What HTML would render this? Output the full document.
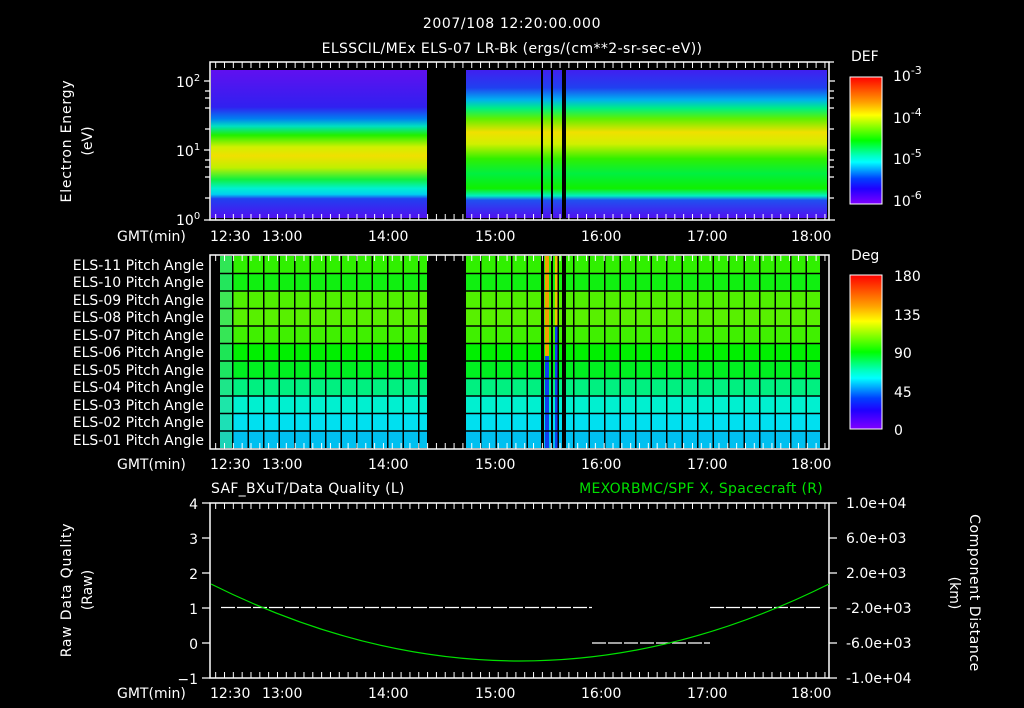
<!DOCTYPE html>
<html><head><meta charset="utf-8"><style>
html,body{margin:0;padding:0;background:#000;width:1024px;height:708px;overflow:hidden}
svg{display:block}
text{font-family:"DejaVu Sans","Liberation Sans",sans-serif;fill:#fff;font-size:14px}
</style></head><body>
<svg width="1024" height="708" viewBox="0 0 1024 708" xmlns="http://www.w3.org/2000/svg">
<defs>
<linearGradient id="sL" x1="0" y1="0" x2="0" y2="1">
<stop offset="0" stop-color="#6010f0"/><stop offset="0.25" stop-color="#3020f0"/>
<stop offset="0.33" stop-color="#0080f0"/><stop offset="0.38" stop-color="#00e0c0"/>
<stop offset="0.44" stop-color="#20f000"/><stop offset="0.52" stop-color="#d0f000"/>
<stop offset="0.58" stop-color="#f0e000"/><stop offset="0.66" stop-color="#c0f000"/>
<stop offset="0.74" stop-color="#10f040"/><stop offset="0.8" stop-color="#00f0d0"/>
<stop offset="0.84" stop-color="#00d0f0"/><stop offset="0.87" stop-color="#2040f0"/>
<stop offset="1" stop-color="#5010f0"/></linearGradient>
<linearGradient id="sR" x1="0" y1="0" x2="0" y2="1">
<stop offset="0" stop-color="#4020f0"/><stop offset="0.12" stop-color="#2040f0"/>
<stop offset="0.2" stop-color="#00b0f0"/><stop offset="0.26" stop-color="#00f080"/>
<stop offset="0.33" stop-color="#60f000"/><stop offset="0.42" stop-color="#f0e000"/>
<stop offset="0.5" stop-color="#d0f000"/><stop offset="0.6" stop-color="#30f000"/>
<stop offset="0.7" stop-color="#00f040"/><stop offset="0.8" stop-color="#10f000"/>
<stop offset="0.85" stop-color="#00f0c0"/><stop offset="0.88" stop-color="#2050f0"/>
<stop offset="1" stop-color="#5010f0"/></linearGradient>
<linearGradient id="cb" x1="0" y1="0" x2="0" y2="1">
<stop offset="0" stop-color="#ff0000"/><stop offset="0.2" stop-color="#ffa000"/>
<stop offset="0.3" stop-color="#ffff00"/><stop offset="0.5" stop-color="#00ff00"/>
<stop offset="0.62" stop-color="#00ffc0"/><stop offset="0.67" stop-color="#00ffff"/>
<stop offset="0.8" stop-color="#0040ff"/><stop offset="0.88" stop-color="#2000ff"/>
<stop offset="1" stop-color="#8000ff"/></linearGradient>
<pattern id="tk" x="224" y="0" width="8.83" height="10" patternUnits="userSpaceOnUse"><rect x="0" y="0" width="1" height="10" fill="#fff"/></pattern>
<pattern id="gv" x="232" y="0" width="15.5" height="10" patternUnits="userSpaceOnUse"><rect x="0" y="0" width="1.5" height="10" fill="#000"/></pattern>
</defs>

<text x="512" y="28" text-anchor="middle" font-size="16" letter-spacing="0.6">2007/108 12:20:00.000</text>
<text x="512" y="53" text-anchor="middle" font-size="16" letter-spacing="0.4">ELSSCIL/MEx ELS-07 LR-Bk  (ergs/(cm**2-sr-sec-eV))</text>

<!-- Panel 1 -->
<rect x="211" y="70" width="216" height="148" fill="url(#sL)"/>
<rect x="466" y="70" width="361" height="148" fill="url(#sR)"/>
<rect x="541" y="70" width="2" height="148" fill="#000"/>
<rect x="551" y="70" width="2" height="148" fill="#000"/>
<rect x="562" y="70" width="4" height="148" fill="#000"/>
<rect x="210" y="62" width="619" height="6" fill="url(#tk)"/>
<rect x="210" y="214" width="619" height="6" fill="url(#tk)"/>
<rect x="210" y="62" width="619" height="158" fill="none" stroke="#fff" stroke-width="1.5"/>
<g stroke="#fff" stroke-width="1.2">
<path d="M204 81h6M204 150h6M204 220h6M205 91h5M205 98h5M205 108h5M205 129h5M205 160h5M205 167h5M205 177h5M205 198h5"/>
<path d="M829 81h6M829 150h6M829 220h6M829 91h5M829 98h5M829 108h5M829 129h5M829 160h5M829 167h5M829 177h5M829 198h5M829 62h5"/>
</g>
<text x="176" y="87" font-size="14">10<tspan dy="-6" font-size="10">2</tspan></text>
<text x="176" y="156" font-size="14">10<tspan dy="-6" font-size="10">1</tspan></text>
<text x="176" y="225" font-size="14">10<tspan dy="-6" font-size="10">0</tspan></text>
<text transform="translate(71,141) rotate(-90)" text-anchor="middle" font-size="16" letter-spacing="0.8">Electron Energy</text>
<text transform="translate(92,141) rotate(-90)" text-anchor="middle" font-size="16">(eV)</text>

<g font-size="14">
<text x="117" y="241">GMT(min)</text>
<text x="210" y="241">12:30</text><text x="262" y="241">13:00</text><text x="368" y="241">14:00</text>
<text x="475" y="241">15:00</text><text x="581" y="241">16:00</text><text x="687" y="241">17:00</text><text x="791" y="241">18:00</text>
</g>

<rect x="850" y="77" width="32" height="127" fill="url(#cb)" stroke="#fff" stroke-width="1"/>
<text x="851" y="61" font-size="16">DEF</text>
<text x="893" y="81" font-size="16">10<tspan dy="-7" font-size="11">-3</tspan></text>
<text x="893" y="123" font-size="16">10<tspan dy="-7" font-size="11">-4</tspan></text>
<text x="893" y="164" font-size="16">10<tspan dy="-7" font-size="11">-5</tspan></text>
<text x="893" y="206" font-size="16">10<tspan dy="-7" font-size="11">-6</tspan></text>

<!-- Panel 2 -->
<g>
<rect x="220" y="256" width="600" height="17.5" fill="#30f000"/>
<rect x="220" y="273.5" width="600" height="17.5" fill="#10f010"/>
<rect x="220" y="291" width="600" height="17.5" fill="#50f000"/>
<rect x="220" y="308.5" width="600" height="17.5" fill="#58f000"/>
<rect x="220" y="326" width="600" height="17.5" fill="#40f000"/>
<rect x="220" y="343.5" width="600" height="17.5" fill="#00f000"/>
<rect x="220" y="361" width="600" height="17.5" fill="#00f020"/>
<rect x="220" y="378.5" width="600" height="17.5" fill="#00f080"/>
<rect x="220" y="396" width="600" height="17.5" fill="#00f0d0"/>
<rect x="220" y="413.5" width="600" height="17.5" fill="#00e0f0"/>
<rect x="220" y="431" width="600" height="17" fill="#00c0f0"/>
</g>
<rect x="220" y="256" width="12" height="192" fill="#30e090" opacity="0.6"/>
<rect x="545" y="256" width="4" height="100" fill="#f0a000"/>
<rect x="545" y="356" width="4" height="92" fill="#1040f0"/>
<rect x="555" y="256" width="4" height="70" fill="#f0c000"/>
<rect x="555" y="326" width="4" height="122" fill="#1040f0"/>
<rect x="232" y="256" width="590" height="192" fill="url(#gv)"/>
<g stroke="#000" stroke-width="1.5">
<path d="M220 273.5h600M220 291h600M220 308.5h600M220 326h600M220 343.5h600M220 361h600M220 378.5h600M220 396h600M220 413.5h600M220 431h600"/>
</g>
<rect x="427" y="256" width="39" height="192" fill="#000"/>
<rect x="541" y="256" width="3" height="192" fill="#000"/>
<rect x="551" y="256" width="2" height="192" fill="#000"/>
<rect x="562" y="256" width="4" height="192" fill="#000"/>
<rect x="210" y="255" width="619" height="6" fill="url(#tk)"/>
<rect x="210" y="443" width="619" height="6" fill="url(#tk)"/>
<rect x="210" y="255" width="619" height="194" fill="none" stroke="#fff" stroke-width="1.5"/>
<g font-size="13" text-anchor="end">
<text x="204" y="270">ELS-11 Pitch Angle</text><text x="204" y="287">ELS-10 Pitch Angle</text>
<text x="204" y="305">ELS-09 Pitch Angle</text><text x="204" y="322">ELS-08 Pitch Angle</text>
<text x="204" y="340">ELS-07 Pitch Angle</text><text x="204" y="357">ELS-06 Pitch Angle</text>
<text x="204" y="375">ELS-05 Pitch Angle</text><text x="204" y="392">ELS-04 Pitch Angle</text>
<text x="204" y="410">ELS-03 Pitch Angle</text><text x="204" y="427">ELS-02 Pitch Angle</text>
<text x="204" y="445">ELS-01 Pitch Angle</text>
</g>
<g font-size="14">
<text x="117" y="469">GMT(min)</text>
<text x="210" y="469">12:30</text><text x="262" y="469">13:00</text><text x="368" y="469">14:00</text>
<text x="475" y="469">15:00</text><text x="581" y="469">16:00</text><text x="687" y="469">17:00</text><text x="791" y="469">18:00</text>
</g>
<rect x="850" y="275" width="32" height="154" fill="url(#cb)" stroke="#fff" stroke-width="1"/>
<text x="851" y="260" font-size="16">Deg</text>
<g font-size="16"><text x="894" y="281">180</text><text x="894" y="320">135</text><text x="894" y="358">90</text><text x="894" y="397">45</text><text x="894" y="435">0</text></g>

<!-- Panel 3 -->
<text x="211" y="493" font-size="16" letter-spacing="0.3">SAF_BXuT/Data Quality (L)</text>
<text x="823" y="493" font-size="16" letter-spacing="0.3" text-anchor="end" style="fill:#00e000">MEXORBMC/SPF X, Spacecraft (R)</text>
<rect x="210" y="503" width="619" height="6" fill="url(#tk)"/>
<rect x="210" y="672" width="619" height="6" fill="url(#tk)"/>
<path d="M210 503H829V678H210Z" fill="none" stroke="#fff" stroke-width="1.5"/>
<g stroke="#fff" stroke-width="1.2">
<path d="M202 503h8M202 538h8M202 573h8M202 608h8M202 643h8M202 678h8"/>
<path d="M829 503h8M829 538h8M829 573h8M829 608h8M829 643h8M829 678h8"/>
</g>
<g font-size="14" text-anchor="end"><text x="198" y="509">4</text><text x="198" y="544">3</text><text x="198" y="579">2</text><text x="198" y="614">1</text><text x="198" y="649">0</text><text x="198" y="684">−1</text></g>
<g font-size="13"><text x="846" y="508">1.0e+04</text><text x="846" y="543">6.0e+03</text><text x="846" y="578">2.0e+03</text><text x="846" y="613">-2.0e+03</text><text x="846" y="648">-6.0e+03</text><text x="846" y="683">-1.0e+04</text></g>
<path d="M221 607.5H592M592 643H710M710 607.5H820" stroke="#fff" stroke-width="1.2" stroke-dasharray="14 2"/>
<path d="M211 584Q520 738 829 584" fill="none" stroke="#00e000" stroke-width="1.2"/>
<text transform="translate(71,590) rotate(-90)" text-anchor="middle" font-size="16" letter-spacing="0.8">Raw Data Quality</text>
<text transform="translate(92,590) rotate(-90)" text-anchor="middle" font-size="16">(Raw)</text>
<text transform="translate(970,593) rotate(90)" text-anchor="middle" font-size="16" letter-spacing="0.6">Component Distance</text>
<text transform="translate(950,593) rotate(90)" text-anchor="middle" font-size="16">(km)</text>
<g font-size="14">
<text x="117" y="698">GMT(min)</text>
<text x="210" y="698">12:30</text><text x="262" y="698">13:00</text><text x="368" y="698">14:00</text>
<text x="475" y="698">15:00</text><text x="581" y="698">16:00</text><text x="687" y="698">17:00</text><text x="791" y="698">18:00</text>
</g>
</svg>
</body></html>
